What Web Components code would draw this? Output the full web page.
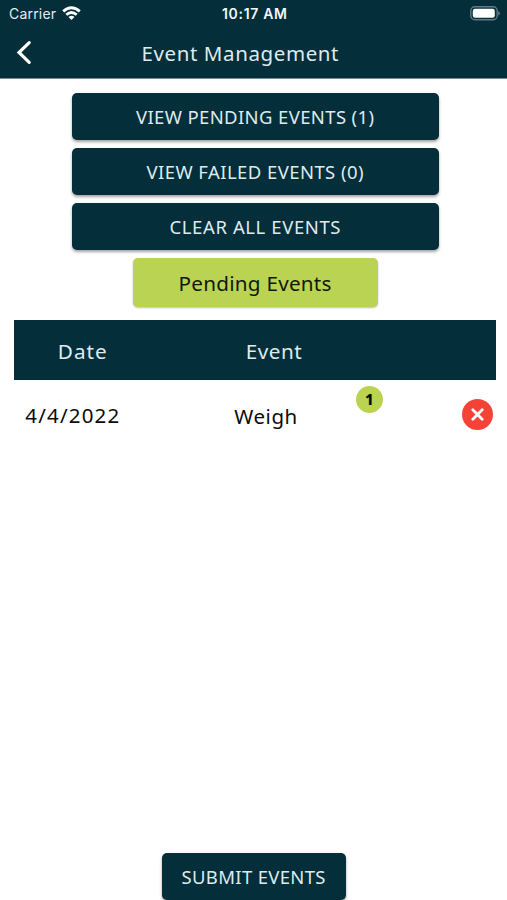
<!DOCTYPE html>
<html lang="en">
<head>
<meta charset="utf-8">
<title>Event Management</title>
<style>
html,body{margin:0;height:100%;background:#fff}
body{font-family:"Noto Sans","Open Sans",sans-serif;color:#0b0b0b;--navy:#032e3a;--lime:#bbd353;overflow:hidden}
</style>
</head>
<body>
<event-app></event-app>
<script>
const define = (name, html, setup) => {
  const t = document.createElement('template');
  t.innerHTML = html;
  customElements.define(name, class extends HTMLElement {
    constructor() {
      super();
      this.attachShadow({mode: 'open'}).append(t.content.cloneNode(true));
    }
    connectedCallback() { if (setup) setup(this); }
  });
};

/* Tracks a single-line label so that it spans the width given in "span". */
define('text-label', `<style>
:host{display:inline-block;white-space:pre;line-height:1.3}
span{display:inline-block}
</style><span></span>`, el => {
  const s = el.shadowRoot.querySelector('span');
  s.textContent = el.getAttribute('text');
  const span = parseFloat(el.getAttribute('span'));
  const n = s.textContent.length - 1;
  if (span && n > 0) {
    const ls = (span - s.getBoundingClientRect().width) / n;
    s.style.letterSpacing = ls + 'px';
    s.style.marginRight = -ls + 'px';
  }
});

define('status-bar', `<style>
:host{display:grid;grid-template-columns:1fr auto 1fr;align-items:center;height:28px;padding:0 7px 0 9px;font:14px Inter,sans-serif;color:#e3edf0}
.l{display:flex;align-items:center;gap:6px}
.time{font-weight:600;color:#f3f8f9}
.r{justify-self:end}
svg{display:block;margin-top:-1px}
</style>
<div class="l"><text-label text="Carrier" span="47"></text-label>
<svg width="19" height="15" viewBox="0 0 19 15" fill="none" stroke="#fff" stroke-width="2.8"><path d="M1.2 5.4Q9.5-2 17.8 5.4"/><path d="M4.3 8.8Q9.5 4.2 14.7 8.8"/><path d="M9.5 14.1L6.5 11Q9.5 8.6 12.5 11Z" fill="#fff" stroke="none"/></svg></div>
<div class="time"><text-label text="10:17 AM" span="65"></text-label></div>
<svg class="r" width="31" height="15" viewBox="0 0 31 15"><rect x="1.8" y=".8" width="26.4" height="13" rx="4" fill="none" stroke="#607a80" stroke-width="1.4"/><rect x="3.8" y="2.8" width="22" height="9" rx="2.2" fill="#fff"/><path d="M29.2 5.2Q31 5.6 31 7.3T29.2 9.4Z" fill="#607a80"/></svg>`);

define('nav-bar', `<style>
:host{display:grid;grid-template-columns:48px 1fr 75px;align-items:center;height:50px;font-size:20.5px;color:#dfeaed}
svg{display:block;margin:-2px 0 0 16px}
.t{justify-self:center}
</style>
<svg width="17" height="25" viewBox="0 0 17 25" fill="none" stroke="#fff" stroke-width="3.2" stroke-linecap="round"><path d="M13.2 2.6L3 12.5L13.2 22.4"/></svg>
<div class="t"><text-label text="Event Management" span="197"></text-label></div>`);

define('action-button', `<style>
:host{display:flex;align-items:center;justify-content:center;box-sizing:border-box;width:367px;height:47.5px;padding-top:2px;border-radius:5px;background:var(--navy);color:#dfeaed;font-size:18.5px;box-shadow:0 2px 3px rgba(0,0,0,.36)}
:host([kind=heading]){width:245px;height:49px;background:var(--lime);color:#11180a;font-size:20.7px;box-shadow:0 1px 2px rgba(0,0,0,.26)}
:host([kind=submit]){width:184px}
</style><slot></slot>`);

define('count-badge', `<style>
:host{display:flex;align-items:center;justify-content:center;width:27px;height:27px;border-radius:50%;background:var(--lime);font:800 15px "Noto Sans",sans-serif;color:#0b0b0b}
</style><slot></slot>`);

define('delete-button', `<style>
:host{display:flex;width:31px;height:31px}
</style><svg width="31" height="31" viewBox="0 0 31 31"><circle cx="15.5" cy="15.5" r="15.5" fill="#f44336"/><path d="M10.8 10.8L20.2 20.2M20.2 10.8L10.8 20.2" stroke="#fff" stroke-width="2.8" stroke-linecap="round"/></svg>`);

define('event-table', `<style>
:host{display:block;width:481.5px;margin:13px 0 0 3px;font-size:20.7px}
.h,.row{display:grid;grid-template-columns:136px 247px 98.5px;align-items:center;justify-items:center}
.h{height:60.5px;padding-top:0;background:var(--navy);color:#dfeaed}
.h text-label{margin-top:3px}
.row{height:68px;position:relative;font-size:20.5px}
.row>:nth-child(1){margin:2px 20px 0 0}
.row>:nth-child(2){margin:4px 16px 0 0}
delete-button{justify-self:end;margin-right:3px}
count-badge{position:absolute;left:341.5px;top:5.5px}
</style>
<div class="h"><text-label text="Date" span="49"></text-label><text-label text="Event" span="56"></text-label></div>
<div class="row"><text-label text="4/4/2022" span="94"></text-label><text-label text="Weigh" span="63"></text-label><delete-button></delete-button><count-badge>1</count-badge></div>`);

define('event-app', `<style>
:host{display:flex;flex-direction:column;height:100vh}
header{background:var(--navy);height:78px;border-bottom:1px solid #6f8b99}
main{flex:1;display:flex;flex-direction:column;align-items:center;padding-top:13.5px}
.actions{display:flex;flex-direction:column;align-items:center;gap:7.5px;padding-left:3px}
footer{display:flex;justify-content:center}
</style>
<header><status-bar></status-bar><nav-bar></nav-bar></header>
<main>
<div class="actions">
<action-button><text-label text="VIEW PENDING EVENTS (1)" span="238"></text-label></action-button>
<action-button><text-label text="VIEW FAILED EVENTS (0)" span="217"></text-label></action-button>
<action-button><text-label text="CLEAR ALL EVENTS" span="171"></text-label></action-button>
<action-button kind="heading"><text-label text="Pending Events" span="153"></text-label></action-button>
</div>
<event-table></event-table>
</main>
<footer><action-button kind="submit"><text-label text="SUBMIT EVENTS" span="144"></text-label></action-button></footer>`);
</script>
</body>
</html>
